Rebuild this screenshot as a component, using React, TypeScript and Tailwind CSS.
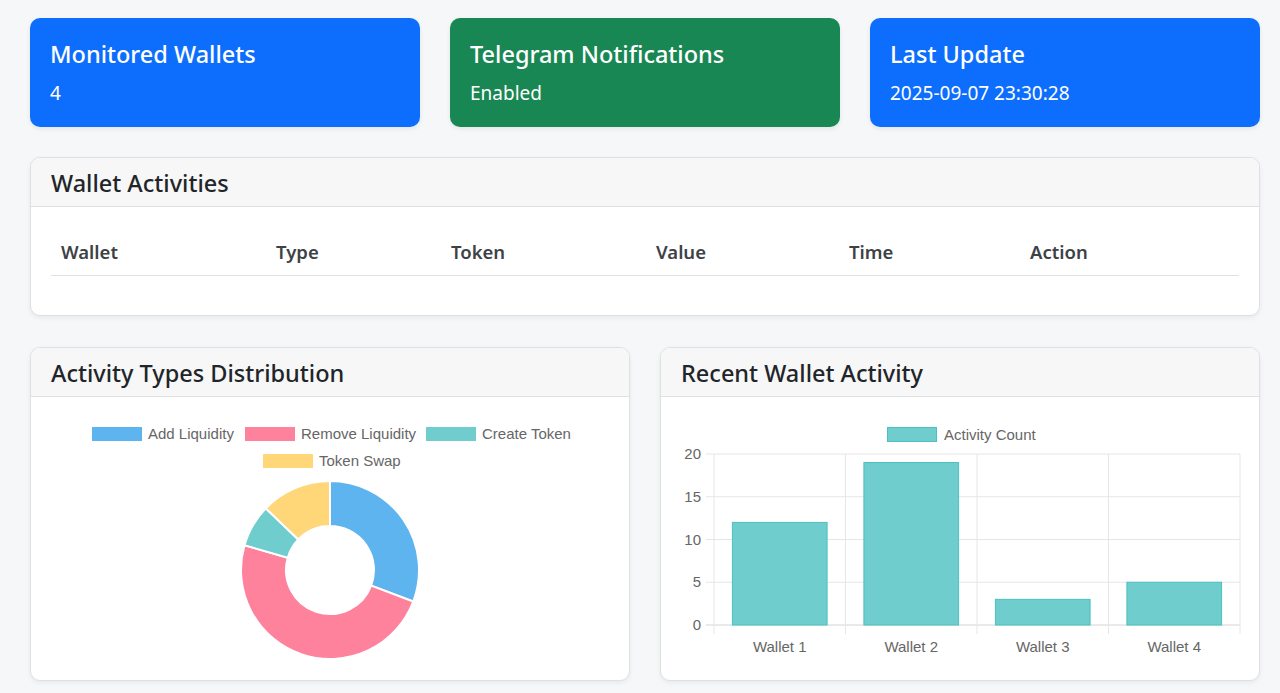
import React from "react";

const FONT = { fontFamily: '"Noto Sans", "Open Sans", sans-serif' };
const CHART_FONT = '"Liberation Sans", Arial, sans-serif';

const stats = [
  { title: "Monitored Wallets", value: "4", color: "bg-[#0d6efd]" },
  { title: "Telegram Notifications", value: "Enabled", color: "bg-[#198754]" },
  { title: "Last Update", value: "2025-09-07 23:30:28", color: "bg-[#0d6efd]" },
];

const columns = [
  { label: "Wallet", w: "w-[215px]" },
  { label: "Type", w: "w-[175px]" },
  { label: "Token", w: "w-[205px]" },
  { label: "Value", w: "w-[193px]" },
  { label: "Time", w: "w-[181px]" },
  { label: "Action", w: "" },
];

const slices = [
  { label: "Add Liquidity", value: 12, fill: "#5eb4ef" },
  { label: "Remove Liquidity", value: 19, fill: "#ff829d" },
  { label: "Create Token", value: 3, fill: "#6fcdcd" },
  { label: "Token Swap", value: 5, fill: "#ffd778" },
];

const bars = [
  { label: "Wallet 1", value: 12 },
  { label: "Wallet 2", value: 19 },
  { label: "Wallet 3", value: 3 },
  { label: "Wallet 4", value: 5 },
];

function Card({ title, children }: { title: string; children: React.ReactNode }) {
  return (
    <div className="rounded-[10px] border border-[#dfe0e1] bg-white shadow-[0_2px_5px_rgba(0,0,0,0.06)] overflow-hidden">
      <div className="h-[49px] px-5 pt-[2px] flex items-center bg-[#f7f7f7] border-b border-[#dfe0e1]">
        <h5 className="text-[23.5px] font-medium text-[#212529] leading-[30px]">{title}</h5>
      </div>
      {children}
    </div>
  );
}

function arcPath(cx: number, cy: number, r: number, ri: number, a0: number, a1: number) {
  const rad = (a: number) => (a * Math.PI) / 180;
  const p = (rr: number, a: number) => [cx + rr * Math.sin(rad(a)), cy - rr * Math.cos(rad(a))];
  const large = a1 - a0 > 180 ? 1 : 0;
  const [x0, y0] = p(r, a0);
  const [x1, y1] = p(r, a1);
  const [x2, y2] = p(ri, a1);
  const [x3, y3] = p(ri, a0);
  return `M${x0} ${y0} A${r} ${r} 0 ${large} 1 ${x1} ${y1} L${x2} ${y2} A${ri} ${ri} 0 ${large} 0 ${x3} ${y3} Z`;
}

function DonutChart() {
  const total = slices.reduce((s, d) => s + d.value, 0);
  let acc = 0;
  const legend = [
    { box: 41, text: 97, y: 18 },
    { box: 194, text: 250, y: 18 },
    { box: 375, text: 431, y: 18 },
    { box: 212, text: 268, y: 45 },
  ];
  return (
    <svg width="560" height="245" style={{ fontFamily: CHART_FONT }}>
      {slices.map((s, i) => (
        <g key={s.label}>
          <rect x={legend[i].box} y={legend[i].y - 7} width="50" height="14" fill={s.fill} />
          <text x={legend[i].text} y={legend[i].y + 5} fontSize="15" fill="#666">
            {s.label}
          </text>
        </g>
      ))}
      {slices.map((s) => {
        const a0 = (acc / total) * 360;
        acc += s.value;
        const a1 = (acc / total) * 360;
        return (
          <path key={s.label} d={arcPath(279, 154, 89, 44, a0, a1)} fill={s.fill} stroke="#fff" strokeWidth="2" />
        );
      })}
    </svg>
  );
}

function BarChart() {
  const top = 38;
  const bottom = 209;
  const left = 33;
  const right = 559;
  const unit = (bottom - top) / 20;
  const cat = (right - left) / 4;
  return (
    <svg width="560" height="245" style={{ fontFamily: CHART_FONT }}>
      <rect x="206.5" y="11.5" width="49" height="14" fill="#6fcdcd" stroke="#4bc0c0" />
      <text x="263" y="24" fontSize="15" fill="#666">
        Activity Count
      </text>
      {[0, 5, 10, 15, 20].map((v) => {
        const y = bottom - v * unit;
        return (
          <g key={v}>
            <line x1={left - 8} x2={right} y1={y} y2={y} stroke={v === 0 ? "#d4d4d4" : "#e6e6e6"} />
            <text x="20" y={y + 5} fontSize="15" fill="#666" textAnchor="end">
              {v}
            </text>
          </g>
        );
      })}
      {[0, 1, 2, 3, 4].map((i) => (
        <line key={i} x1={left + i * cat} x2={left + i * cat} y1={top} y2={bottom + 9} stroke="#e6e6e6" />
      ))}
      {bars.map((b, i) => {
        const bw = cat * 0.72;
        const x = left + i * cat + (cat - bw) / 2;
        const h = b.value * unit;
        return (
          <g key={b.label}>
            <rect x={x} y={bottom - h} width={bw} height={h} fill="#6fcdcd" stroke="#4bc0c0" strokeWidth="1" />
            <text x={left + i * cat + cat / 2} y="236" fontSize="15" fill="#666" textAnchor="middle">
              {b.label}
            </text>
          </g>
        );
      })}
    </svg>
  );
}

export default function App() {
  return (
    <div className="min-h-screen bg-[#f6f7f9] pl-[30px] pr-[20px] pt-[18px] pb-[12px]" style={FONT}>
      <div className="grid grid-cols-3 gap-[30px]">
        {stats.map((s) => (
          <div key={s.title} className={`${s.color} rounded-[10px] px-5 pt-[21px] pb-[19px] text-white shadow-[0_2px_5px_rgba(0,0,0,0.08)]`}>
            <h5 className="text-[23.5px] font-medium leading-[30px] mb-[9px]">{s.title}</h5>
            <p className="text-[19px] leading-[30px]">{s.value}</p>
          </div>
        ))}
      </div>

      <div className="mt-[30px]">
        <Card title="Wallet Activities">
          <div className="p-5">
            <table className="w-full text-left">
              <thead>
                <tr className="border-b border-[#dee2e6]">
                  {columns.map((c) => (
                    <th key={c.label} className={`${c.w} px-[10px] pt-[10px] pb-[8px] text-[18.5px] leading-[30px] font-semibold text-[#3d4247]`}>
                      {c.label}
                    </th>
                  ))}
                </tr>
              </thead>
              <tbody />
            </table>
            <div className="h-[19px]" />
          </div>
        </Card>
      </div>

      <div className="mt-[31px] grid grid-cols-2 gap-[30px]">
        <Card title="Activity Types Distribution">
          <div className="px-5 pt-[19px] pb-[19px]">
            <DonutChart />
          </div>
        </Card>
        <Card title="Recent Wallet Activity">
          <div className="px-5 pt-[19px] pb-[19px]">
            <BarChart />
          </div>
        </Card>
      </div>
    </div>
  );
}
